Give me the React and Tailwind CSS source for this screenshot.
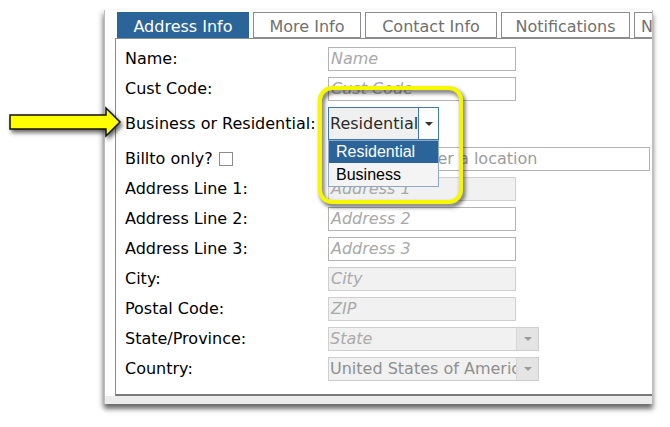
const TABS = [
  { name: 'Address Info', w: 'w-[132px]', active: true },
  { name: 'More Info', w: 'w-[108px]' },
  { name: 'Contact Info', w: 'w-[132px]' },
  { name: 'Notifications', w: 'w-[129px]' },
  { name: 'Notes', w: 'w-[60px]' },
];

const FIELDS = [
  { label: 'Name:', kind: 'text', ph: 'Name' },
  { label: 'Cust Code:', kind: 'text', ph: 'Cust Code' },
  { label: 'Business or Residential:', kind: 'type' },
  { label: 'Billto only?', kind: 'location' },
  { label: 'Address Line 1:', kind: 'text', ph: 'Address 1', disabled: true },
  { label: 'Address Line 2:', kind: 'text', ph: 'Address 2' },
  { label: 'Address Line 3:', kind: 'text', ph: 'Address 3' },
  { label: 'City:', kind: 'text', ph: 'City', disabled: true },
  { label: 'Postal Code:', kind: 'text', ph: 'ZIP', disabled: true },
  { label: 'State/Province:', kind: 'combo', ph: 'State' },
  { label: 'Country:', kind: 'combo', value: 'United States of America' },
];

function Caret({ className }) {
  return (
    <svg width="8" height="4" viewBox="0 0 8 4" className={className}>
      <path d="M0 0h8L4 4z" fill="currentColor" />
    </svg>
  );
}

function TextBox({ ph, disabled }) {
  return (
    <div
      className={`h-[24px] w-[188px] border px-[2px] text-[16px] italic leading-[22px] text-[#a9a9a9] ${
        disabled ? 'border-[#cfcfcf] bg-[#f1f1f1]' : 'border-[#b3b3b3] bg-white'
      }`}
    >
      {ph}
    </div>
  );
}

function ComboBox({ ph, value }) {
  return (
    <div className="flex h-[24px] w-[211px] border border-[#cfcfcf] bg-[#f1f1f1]">
      <div className="flex-1 overflow-hidden whitespace-nowrap px-[1px] text-[16px] leading-[22px] text-[#8f8f8f]">
        {value ? value : <span className="italic text-[#ababab]">{ph}</span>}
      </div>
      <div className="flex w-[22px] items-center justify-center border-l border-[#d6d6d6] bg-[#e4e4e4] text-[#9a9a9a]">
        <Caret />
      </div>
    </div>
  );
}

function TypeSelect() {
  return (
    <div className="relative">
      <div className="flex h-[33px] w-[111px] border border-[#3f77b5] bg-[#f0f0f0]">
        <div className="flex-1 pl-[1px] text-[16px] leading-[31px] text-[#2b2b2b]">Residential</div>
        <div className="flex w-[22px] items-center justify-center border-l border-[#3f77b5] bg-white text-[#333]">
          <Caret />
        </div>
      </div>
      <div className="absolute left-0 top-[33px] z-10 w-[111px] border border-[#8aa9c9] bg-[#f4f4f4] font-['Liberation_Sans',Arial,sans-serif] text-[16px]">
        <div className="h-[22px] bg-[#2a6499] pl-[7px] leading-[22px] text-white">Residential</div>
        <div className="h-[23px] pl-[7px] leading-[23px] text-black">Business</div>
      </div>
    </div>
  );
}

function Field({ f }) {
  let control;
  if (f.kind === 'type') control = <TypeSelect />;
  else if (f.kind === 'combo') control = <ComboBox ph={f.ph} value={f.value} />;
  else if (f.kind === 'location')
    control = (
      <div className="h-[24px] w-[322px] border border-[#b3b3b3] bg-white pl-[82px] text-[16px] leading-[22px] text-[#9c9c9c]">
        Enter a location
      </div>
    );
  else control = <TextBox ph={f.ph} disabled={f.disabled} />;

  return (
    <div className={`flex items-center ${f.kind === 'type' ? 'mb-[1px]' : ''}`}>
      <div className="flex w-[203px] items-center text-[16px] text-black">
        {f.label}
        {f.kind === 'location' && (
          <span className="ml-[6px] inline-block h-[14px] w-[14px] border border-[#8c8c8c] bg-white" />
        )}
      </div>
      {control}
    </div>
  );
}

export default function App() {
  return (
    <div className="relative h-[427px] w-[670px] overflow-hidden bg-white font-['DejaVu_Sans',Verdana,sans-serif]">
      {/* form window */}
      <div className="ml-[104px] mt-[10px] h-[394px] w-[549px] overflow-hidden border-x border-[#bdbdbd] bg-[#ebebeb] pl-[10px] shadow-[0_5px_5px_rgba(0,0,0,0.55),-3px_2px_5px_rgba(0,0,0,0.12)]">
        <div className="-ml-[10px] h-[386px] bg-white pl-[10px]">
          <div className="flex gap-[4px] pl-[2px] pt-[2px]">
            {TABS.map((t) => (
              <div
                key={t.name}
                className={`h-[26px] shrink-0 overflow-hidden whitespace-nowrap border pt-[2px] text-center text-[16px] leading-[23px] ${t.w} ${
                  t.active ? 'border-[#2a6499] bg-[#2a6499] text-white' : 'border-[#8c8c8c] bg-white text-[#707070]'
                }`}
              >
                {t.name}
              </div>
            ))}
          </div>
          <div className="flex h-[358px] w-[600px] flex-col gap-[6px] border border-[#8c8c8c] border-b-[#7a7a7a] border-b-2 pl-[9px] pt-[8px]">
            {FIELDS.map((f) => (
              <Field key={f.label} f={f} />
            ))}
          </div>
        </div>
      </div>

      {/* callout arrow */}
      <svg
        width="130"
        height="40"
        viewBox="0 0 130 40"
        className="absolute left-0 top-[102px] drop-shadow-[2px_3px_2px_rgba(0,0,0,0.6)]"
      >
        <polygon
          points="10,13 106,13 106,6 120,20 106,34 106,27 10,27"
          fill="#ffff00"
          stroke="#111"
          strokeWidth="1.5"
          strokeLinejoin="miter"
        />
      </svg>

      {/* highlight ring */}
      <div className="absolute left-[318px] top-[86px] h-[118px] w-[145px] rounded-[14px] border-4 border-[#f7f700] drop-shadow-[2px_3px_2px_rgba(0,0,0,0.65)]" />
    </div>
  );
}
